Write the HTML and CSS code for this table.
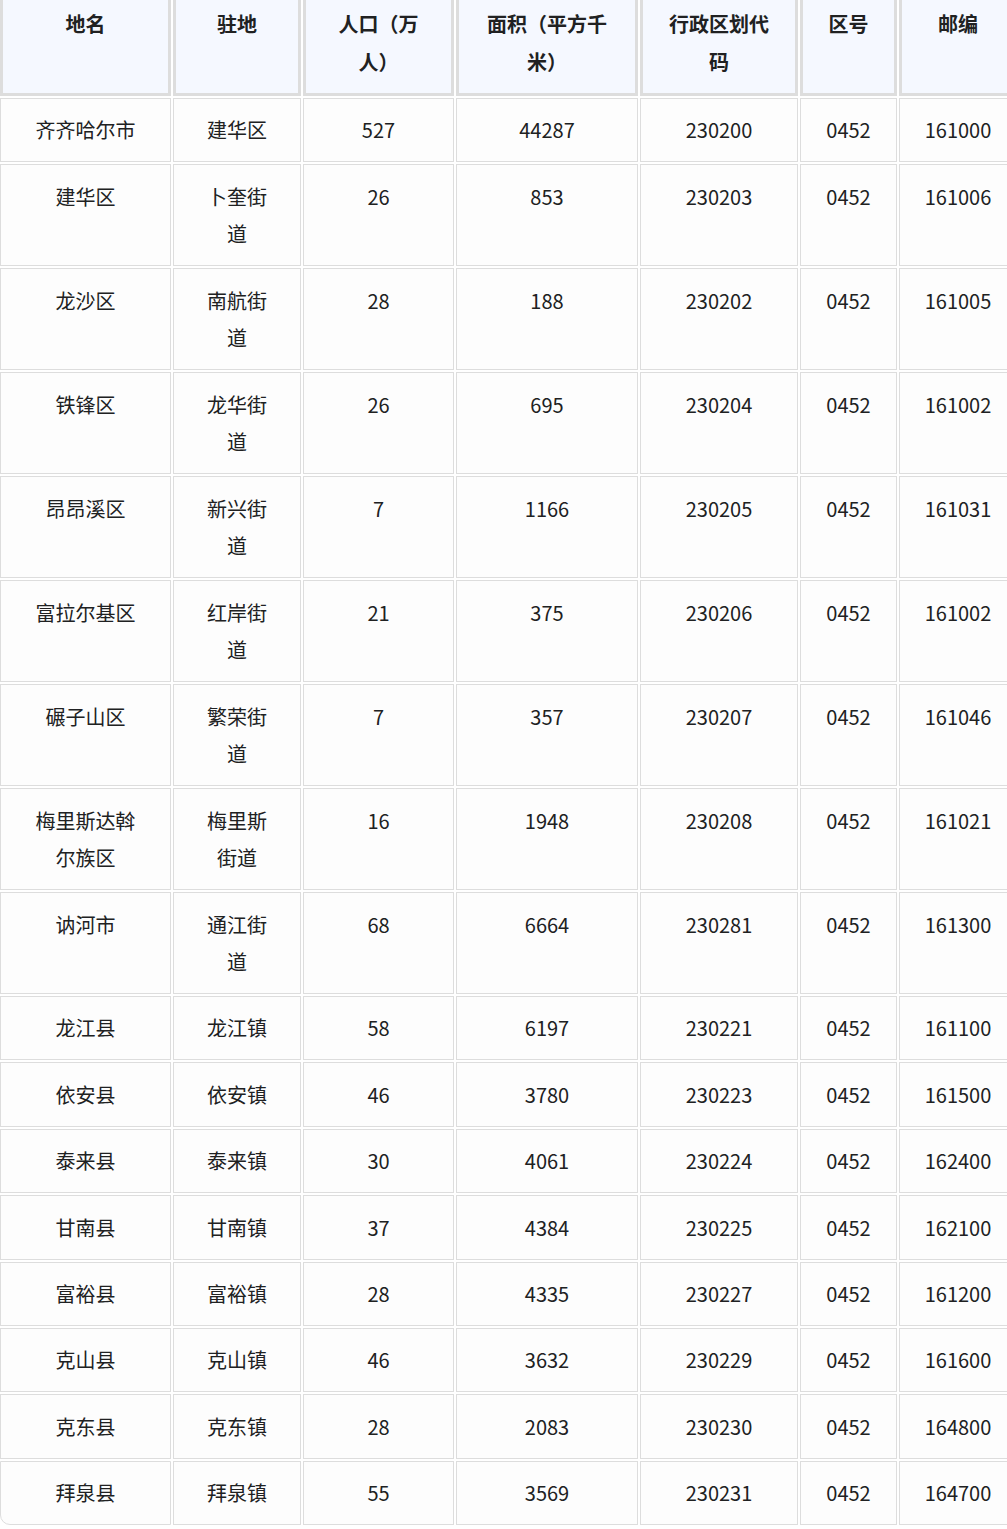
FILE: index.html
```html
<!DOCTYPE html>
<html lang="zh-CN">
<head>
<meta charset="utf-8">
<title>齐齐哈尔市行政区划</title>
<link rel="stylesheet" href="styles.css">
</head>
<body>
<div class="wrap">
<table class="grid">
<colgroup>
<col class="c1"><col class="c2"><col class="c3"><col class="c4"><col class="c5"><col class="c6"><col class="c7">
</colgroup>
<thead>
<tr><th>地名</th><th>驻地</th><th>人口（万人）</th><th>面积（平方千米）</th><th>行政区划代码</th><th>区号</th><th>邮编</th></tr>
</thead>
<tbody>
<tr><td>齐齐哈尔市</td><td>建华区</td><td>527</td><td>44287</td><td>230200</td><td>0452</td><td>161000</td></tr>
<tr><td>建华区</td><td>卜奎街道</td><td>26</td><td>853</td><td>230203</td><td>0452</td><td>161006</td></tr>
<tr><td>龙沙区</td><td>南航街道</td><td>28</td><td>188</td><td>230202</td><td>0452</td><td>161005</td></tr>
<tr><td>铁锋区</td><td>龙华街道</td><td>26</td><td>695</td><td>230204</td><td>0452</td><td>161002</td></tr>
<tr><td>昂昂溪区</td><td>新兴街道</td><td>7</td><td>1166</td><td>230205</td><td>0452</td><td>161031</td></tr>
<tr><td>富拉尔基区</td><td>红岸街道</td><td>21</td><td>375</td><td>230206</td><td>0452</td><td>161002</td></tr>
<tr><td>碾子山区</td><td>繁荣街道</td><td>7</td><td>357</td><td>230207</td><td>0452</td><td>161046</td></tr>
<tr><td>梅里斯达斡尔族区</td><td>梅里斯街道</td><td>16</td><td>1948</td><td>230208</td><td>0452</td><td>161021</td></tr>
<tr><td>讷河市</td><td>通江街道</td><td>68</td><td>6664</td><td>230281</td><td>0452</td><td>161300</td></tr>
<tr><td>龙江县</td><td>龙江镇</td><td>58</td><td>6197</td><td>230221</td><td>0452</td><td>161100</td></tr>
<tr><td>依安县</td><td>依安镇</td><td>46</td><td>3780</td><td>230223</td><td>0452</td><td>161500</td></tr>
<tr><td>泰来县</td><td>泰来镇</td><td>30</td><td>4061</td><td>230224</td><td>0452</td><td>162400</td></tr>
<tr><td>甘南县</td><td>甘南镇</td><td>37</td><td>4384</td><td>230225</td><td>0452</td><td>162100</td></tr>
<tr><td>富裕县</td><td>富裕镇</td><td>28</td><td>4335</td><td>230227</td><td>0452</td><td>161200</td></tr>
<tr><td>克山县</td><td>克山镇</td><td>46</td><td>3632</td><td>230229</td><td>0452</td><td>161600</td></tr>
<tr><td>克东县</td><td>克东镇</td><td>28</td><td>2083</td><td>230230</td><td>0452</td><td>164800</td></tr>
<tr><td>拜泉县</td><td>拜泉镇</td><td>55</td><td>3569</td><td>230231</td><td>0452</td><td>164700</td></tr>
</tbody>
</table>
</div>
</body>
</html>
```
FILE: styles.css
```css
html, body {
  margin: 0;
  padding: 0;
  background: #ffffff;
  overflow: hidden;
}

.wrap {
  width: 1007px;
  height: 1529px;
  overflow: hidden;
}

.grid {
  margin: -12px 0 0 -2px;
  border-collapse: separate;
  border-spacing: 2px;
  table-layout: fixed;
  width: 1021px;
  font-family: "Noto Sans CJK SC", "Noto Sans", sans-serif;
  font-size: 20px;
  line-height: 37.6px;
  color: #202122;
}

.c1 { width: 171px; }
.c2 { width: 128px; }
.c3 { width: 151px; }
.c4 { width: 182px; }
.c5 { width: 158px; }
.c6 { width: 97px; }
.c7 { width: 118px; }

.grid th,
.grid td {
  text-align: center;
  vertical-align: top;
  padding: 12.4px 25px;
}

.grid th:last-child,
.grid td:last-child {
  padding-left: 18px;
  padding-right: 18px;
}

.grid th {
  background: #f5f8ff;
  border: 3px solid #dddddd;
  font-weight: 700;
}

.grid td {
  background: #fdfdfd;
  border: 1px solid #dddddd;
}

.grid tbody tr:last-child td:first-child {
  border-bottom-left-radius: 10px;
}
```
